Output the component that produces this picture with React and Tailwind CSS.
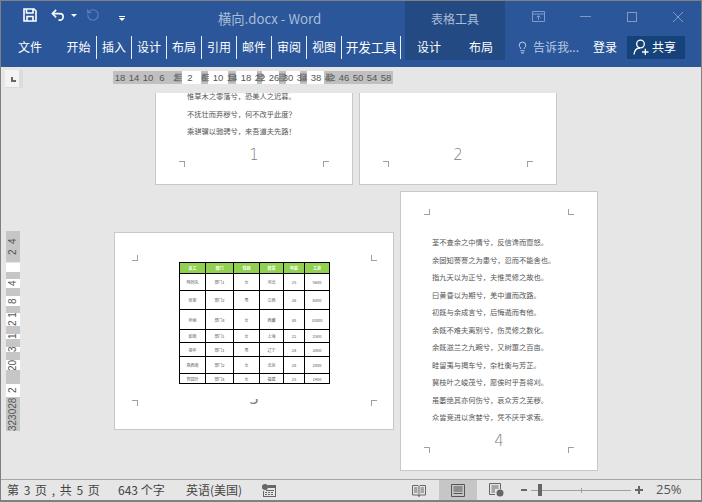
import { Lightbulb, RotateCcw } from "lucide-react";

const cjk = "font-['Noto_Sans_CJK_SC','Noto_Sans',sans-serif]";

const tabs = ["开始", "插入", "设计", "布局", "引用", "邮件", "审阅", "视图"];

const rulerSegs = [
  ["w-[69px]", "bg-[#c0c0c0]"],
  ["w-[19px]", "bg-white"],
  ["w-[7px]", "bg-[#c0c0c0]"],
  ["w-[20px]", "bg-white"],
  ["w-[8px]", "bg-[#c0c0c0]"],
  ["w-[21px]", "bg-white"],
  ["w-[5px]", "bg-[#c0c0c0]"],
  ["w-[17px]", "bg-white"],
  ["w-[7px]", "bg-[#c0c0c0]"],
  ["w-[14px]", "bg-white"],
  ["w-[7px]", "bg-[#c0c0c0]"],
  ["w-[17px]", "bg-white"],
  ["flex-1", "bg-[#c0c0c0]"],
];
const rulerNums = [18, 14, 10, 6, 2, 2, 6, 10, 14, 18, 22, 26, 30, 34, 38, 42, 46, 50, 54, 58];
const hatches = ["left-[62px]", "left-[89px]", "left-[116px]", "left-[144px]", "left-[166px]", "left-[187px]", "left-[213px]"];

const vSegs = [
  ["h-[31px]", "bg-[#c6c6c6]", "2  4"],
  ["h-[1px]", "bg-[#e6e6e6]", ""],
  ["h-[9px]", "bg-white", ""],
  ["h-[7px]", "bg-[#c6c6c6]", ""],
  ["h-[9px]", "bg-white", "4"],
  ["h-[8px]", "bg-[#c6c6c6]", ""],
  ["h-[10px]", "bg-white", "8"],
  ["h-[7px]", "bg-[#c6c6c6]", ""],
  ["h-[13px]", "bg-white", "2 1"],
  ["h-[8px]", "bg-[#c6c6c6]", ""],
  ["h-[5px]", "bg-white", "1"],
  ["h-[8px]", "bg-[#c6c6c6]", ""],
  ["h-[5px]", "bg-white", "3"],
  ["h-[8px]", "bg-[#c6c6c6]", ""],
  ["h-[10px]", "bg-white", "20"],
  ["h-[14px]", "bg-[#c6c6c6]", ""],
  ["h-[13px]", "bg-white", "2"],
  ["h-[34px]", "bg-[#c6c6c6]", "323028"],
];

const tableRows = [
  ["阿同丸", "部门1", "女", "河北", "25", "5600", "h-[17px]"],
  ["张审", "部门2", "男", "江西", "26", "6000", "h-[19px]"],
  ["孙丽", "部门4", "女", "西藏", "48", "10000", "h-[20px]"],
  ["如南", "部门1", "女", "上海", "22", "2500", "h-[13px]"],
  ["祖年", "部门1", "男", "辽宁", "24", "3000", "h-[14px]"],
  ["燕西南", "部门2", "女", "北京", "28", "2800", "h-[17px]"],
  ["贺园玲", "部门4", "女", "福建", "25", "1900", "h-[10px]"],
];

const page1 = ["惟草木之零落兮，恐美人之迟暮。", "不抚壮而弃秽兮，何不改乎此度？", "乘骐骥以驰骋兮，来吾道夫先路！"];
const page4 = [
  "荃不查余之中情兮，反信谗而齌怒。",
  "余固知謇謇之为患兮，忍而不能舍也。",
  "指九天以为正兮，夫惟灵修之故也。",
  "曰黄昏以为期兮，羌中道而改路。",
  "初既与余成言兮，后悔遁而有他。",
  "余既不难夫离别兮，伤灵修之数化。",
  "余既滋兰之九畹兮，又树蕙之百亩。",
  "畦留夷与揭车兮，杂杜衡与芳芷。",
  "冀枝叶之峻茂兮，愿俟时乎吾将刈。",
  "虽萎绝其亦何伤兮，哀众芳之芜秽。",
  "众皆竞进以贪婪兮，凭不厌乎求索。",
];

function Crop({ className }) {
  return <div className={`absolute h-[6px] w-[6px] border-[#a0a0a0] ${className}`} />;
}

function Crops({ right = "right-[23px]", left = "left-[23px]", top = "top-[17px]", bottom = "bottom-[17px]" }) {
  return (
    <>
      <Crop className={`border-r border-b ${left} ${top}`} />
      <Crop className={`border-l border-b ${right} ${top}`} />
      <Crop className={`border-r border-t ${left} ${bottom}`} />
      <Crop className={`border-l border-t ${right} ${bottom}`} />
    </>
  );
}

function Page({ className, lines = [], num }) {
  return (
    <div className={`absolute flex h-[280px] w-[198px] flex-col justify-end border border-[#c8c8c8] bg-white ${className}`}>
      <Crops />
      <div className={`pl-[31px] text-[7.25px] leading-[17.55px] text-[#555] ${cjk}`}>
        {lines.map((l) => (
          <div key={l} className="whitespace-nowrap">{l}</div>
        ))}
      </div>
      <div className="mt-[5px] mb-[20px] h-[18px] text-center font-['DejaVu_Sans',sans-serif] text-[15px] leading-[18px] font-light text-[#808080]">
        {num}
      </div>
    </div>
  );
}

function Hatch({ className }) {
  return (
    <svg viewBox="0 0 7 9" className={`absolute top-[2px] h-[9px] w-[7px] ${className}`} stroke="#777" strokeWidth="0.7">
      <path d="M1 0V9M3 0V9M5 0V9M0 1.5H7M0 3.5H7M0 5.5H7M0 7.5H7" />
    </svg>
  );
}

function DataTable() {
  return (
    <table className={`absolute top-[29px] left-[64px] w-[150px] table-fixed border-collapse text-center text-[4px] leading-none text-[#555] ${cjk}`}>
      <colgroup>
        <col className="w-[26px]" />
        <col className="w-[28px]" />
        <col className="w-[26px]" />
        <col className="w-[24px]" />
        <col className="w-[21px]" />
        <col className="w-[25px]" />
      </colgroup>
      <tbody>
        <tr className="h-[11px] bg-[#92d050] font-bold text-white">
          {["员工", "部门", "性别", "籍贯", "年龄", "工资"].map((h) => (
            <td key={h} className="border border-black p-0">{h}</td>
          ))}
        </tr>
        {tableRows.map((row) => (
          <tr key={row[0]} className={row[6]}>
            {row.slice(0, 6).map((c, i) => (
              <td key={i} className="border border-black p-0">{c}</td>
            ))}
          </tr>
        ))}
      </tbody>
    </table>
  );
}

export default function App() {
  return (
    <div className={`flex h-[502px] w-[702px] flex-col overflow-hidden border border-b-2 border-[#808080] bg-[#e6e6e6] ${cjk}`}>
      <header className="flex h-[66px] shrink-0 bg-[#2b579a] text-white">
        <div className="w-[404px] shrink-0">
          <div className="flex h-[34px] items-start pt-[7px]">
            <svg viewBox="0 0 14 14" className="ml-[22px] h-[14px] w-[14px]" fill="none" stroke="#fff" strokeWidth="1.6">
              <path d="M1 1H11L13 3V13H1Z" />
              <path d="M3.5 1V5H10V1" />
              <path d="M4 13V8.5H10V13" />
            </svg>
            <svg viewBox="0 0 16 14" className="ml-[14px] h-[14px] w-[15px]" fill="none" stroke="#fff" strokeWidth="1.7">
              <path d="M5.5 1.5L1.5 5.5L5.5 9.5" />
              <path d="M1.5 5.5H9.5A3.5 3.5 0 0 1 9.5 12.5H8" />
            </svg>
            <div className="mt-[6px] ml-[5px] h-0 w-0 border-x-[3px] border-t-[3px] border-x-transparent border-t-white" />
            <RotateCcw className="ml-[9px] h-[14px] w-[14px] text-[#5f82b6]" strokeWidth={2} />
            <div className="mt-[8px] ml-[19px] flex flex-col items-center gap-[1px]">
              <div className="h-[1px] w-[6px] bg-white" />
              <div className="h-0 w-0 border-x-[3px] border-t-[3px] border-x-transparent border-t-white" />
            </div>
            <div className="mt-[1px] ml-[93px] text-[13.25px] leading-[20px] whitespace-nowrap text-[#a9bcd8]">
              横向.docx - Word
            </div>
          </div>
          <nav className="flex h-[24px] items-center text-[12px]">
            <div className="w-[59px] pl-[17px]">文件</div>
            {tabs.map((t, i) => (
              <div key={t} className={`h-[23px] border-r border-[#e8eef7] text-center leading-[21px] ${i === 0 ? "w-[37px] pl-[1px]" : "w-[35px]"}`}>
                {t}
              </div>
            ))}
            <div className="h-[23px] w-[59px] border-r border-[#e8eef7] text-center text-[12.7px] leading-[21px] whitespace-nowrap">
              开发工具
            </div>
          </nav>
        </div>
        <div className="mb-[7px] w-[100px] shrink-0 bg-[#234a83]">
          <div className="flex h-[36px] items-center justify-center text-[12px] text-[#a9bcd8]">表格工具</div>
          <div className="flex justify-between px-[12px] text-[12px] leading-[20px]">
            <span>设计</span>
            <span>布局</span>
          </div>
        </div>
        <div className="flex-1">
          <div className="flex h-[34px] items-center pb-[3px] text-[#7f9ac4]">
            <svg viewBox="0 0 13 11" className="ml-[27px] h-[11px] w-[13px]" fill="none" stroke="currentColor">
              <path d="M.5.5H12.5V10.5H.5ZM.5 3H12.5M6.5 9V5M4.5 6.5L6.5 4.5L8.5 6.5" />
            </svg>
            <div className="ml-[35px] h-[1px] w-[11px] bg-current" />
            <div className="ml-[36px] h-[10px] w-[10px] border border-current" />
            <svg viewBox="0 0 10 10" className="ml-[36px] h-[10px] w-[10px]" stroke="currentColor">
              <path d="M0 0L10 10M10 0L0 10" />
            </svg>
          </div>
          <div className="flex h-[24px] items-center text-[12px]">
            <Lightbulb className="ml-[11px] h-[15px] w-[13px] text-[#e4ebf5]" strokeWidth={1.5} />
            <span className="ml-[4px] w-[46px] whitespace-nowrap text-[#b8c8e0]">告诉我...</span>
            <span className="ml-[14px]">登录</span>
            <div className="ml-[10px] flex h-[23px] w-[58px] items-center bg-[#16427a] pl-[6px]">
              <svg viewBox="0 0 16 16" className="h-[16px] w-[16px]" fill="none" stroke="#fff" strokeWidth="1.3">
                <circle cx="7.5" cy="5" r="3.8" />
                <path d="M1 15.5C1.5 11 4 9 7 9M9 13H15.5M12.3 9.8V16" />
              </svg>
              <span className="ml-[3px]">共享</span>
            </div>
          </div>
        </div>
      </header>

      <div className="flex h-[26px] shrink-0 items-start">
        <div className="mt-[3px] ml-[4px] flex h-[18px] w-[18px] items-center justify-center border-r-4 border-b-1 border-[#dcdcdc] bg-[#f3f3f3] pt-[2px] pl-[2px]">
          <div className="h-[5px] w-[5px] border-b-2 border-l-2 border-[#666]" />
        </div>
        <div className="relative mt-[4px] ml-[90px] h-[13px] w-[280px] font-['Liberation_Sans',sans-serif] text-[#555]">
          <div className="flex h-full">
            {rulerSegs.map(([w, bg], i) => (
              <div key={i} className={`${w} ${bg}`} />
            ))}
          </div>
          <div className="absolute inset-0 flex text-center text-[9.5px] leading-[14px]">
            {rulerNums.map((n, i) => (
              <span key={i} className="w-[14px] shrink-0">{n}</span>
            ))}
          </div>
          {hatches.map((h) => (
            <Hatch key={h} className={h} />
          ))}
        </div>
      </div>

      <div className="flex min-h-0 flex-1">
        <div className="mt-[138px] ml-[5px] w-[14px] shrink-0 font-['Liberation_Sans',sans-serif] text-[#555]">
          {vSegs.map(([h, bg, t], i) => (
            <div key={i} className={`flex w-[14px] justify-center overflow-hidden text-[10px] leading-[14px] whitespace-pre ${h} ${bg} rotate-180 [writing-mode:vertical-rl]`}>
              {t}
            </div>
          ))}
        </div>
        <div className="relative flex-1 overflow-hidden">
          <Page className="top-[-188px] left-[135px]" lines={page1} num="1" />
          <Page className="top-[-188px] left-[339px]" num="2" />
          <Page className="top-[98px] left-[380px]" lines={page4} num="4" />
          <div className="absolute top-[139px] left-[94px] h-[198px] w-[280px] border border-[#c8c8c8] bg-white">
            <Crops left="left-[17px]" right="right-[16px]" top="top-[22px]" bottom="bottom-[23px]" />
            <DataTable />
            <div className="absolute bottom-[24px] left-[134px] flex h-[6px] w-[10px] items-end justify-center overflow-hidden font-['DejaVu_Sans',sans-serif] text-[15px] leading-[11px] text-[#808080]">
              3
            </div>
          </div>
        </div>
      </div>

      <footer className="flex h-[21px] shrink-0 items-center border-t border-[#a6a6a6] text-[12px] text-[#444]">
        <span className="ml-[6px] w-[111px] whitespace-nowrap [word-spacing:2px]">第 3 页 , 共 5 页</span>
        <span className="w-[68px] whitespace-nowrap">643 个字</span>
        <span className="w-[76px] whitespace-nowrap">英语(美国)</span>
        <svg viewBox="0 0 14 13" className="h-[13px] w-[14px]" fill="#666">
          <circle cx="3" cy="3" r="3" />
          <path d="M6 1H14V13H1V7H2V12H13V4H6Z" />
          <path d="M4 6H12V7H4ZM3 8H5V9H3ZM6 8H8V9H6ZM9 8H11V9H9ZM3 10H5V11H3ZM6 10H8V11H6ZM9 10H11V11H9Z" />
        </svg>
        <svg viewBox="0 0 14 13" className="ml-[136px] h-[13px] w-[14px]" fill="none" stroke="#666">
          <path d="M.5 1.5H6L7 2.5L8 1.5H13.5V11H8L7 12.5L6 11H.5ZM7 2.5V12.5M2 4H5.5M2 6H5.5M2 8H5.5M8.5 4H12M8.5 6H12M8.5 8H12" />
        </svg>
        <div className="ml-[13px] flex h-[20px] w-[38px] items-center justify-center bg-[#c6c6c6]">
          <svg viewBox="0 0 14 13" className="h-[13px] w-[14px]" fill="none" stroke="#555">
            <path d="M.5.5H13.5V12.5H.5ZM2.5 3H11.5M2.5 5H11.5M2.5 7H11.5M2.5 9.5H11.5" />
          </svg>
        </div>
        <svg viewBox="0 0 15 14" className="ml-[12px] h-[14px] w-[15px]" fill="none" stroke="#666">
          <path d="M6 11.5H.5V.5H11.5V6M2.5 3H9.5M2.5 5H9.5M2.5 7H6M2.5 9H6" />
          <circle cx="11" cy="10" r="3.5" fill="#666" stroke="none" />
        </svg>
        <div className="ml-[17px] h-[2px] w-[6px] bg-[#666]" />
        <div className="relative ml-[4px] h-[1px] w-[100px] bg-[#a0a0a0]">
          <div className="absolute top-[-6px] left-[7px] h-[12px] w-[4px] bg-[#666]" />
          <div className="absolute top-[-2px] left-[50px] h-[5px] w-[1px] bg-[#a0a0a0]" />
        </div>
        <div className="relative ml-[4px] h-[2px] w-[8px] bg-[#666]">
          <div className="absolute top-[-3px] left-[3px] h-[8px] w-[2px] bg-[#666]" />
        </div>
        <span className="ml-[13px] font-['Open_Sans',sans-serif] text-[13px] text-[#555]">25%</span>
      </footer>
    </div>
  );
}
